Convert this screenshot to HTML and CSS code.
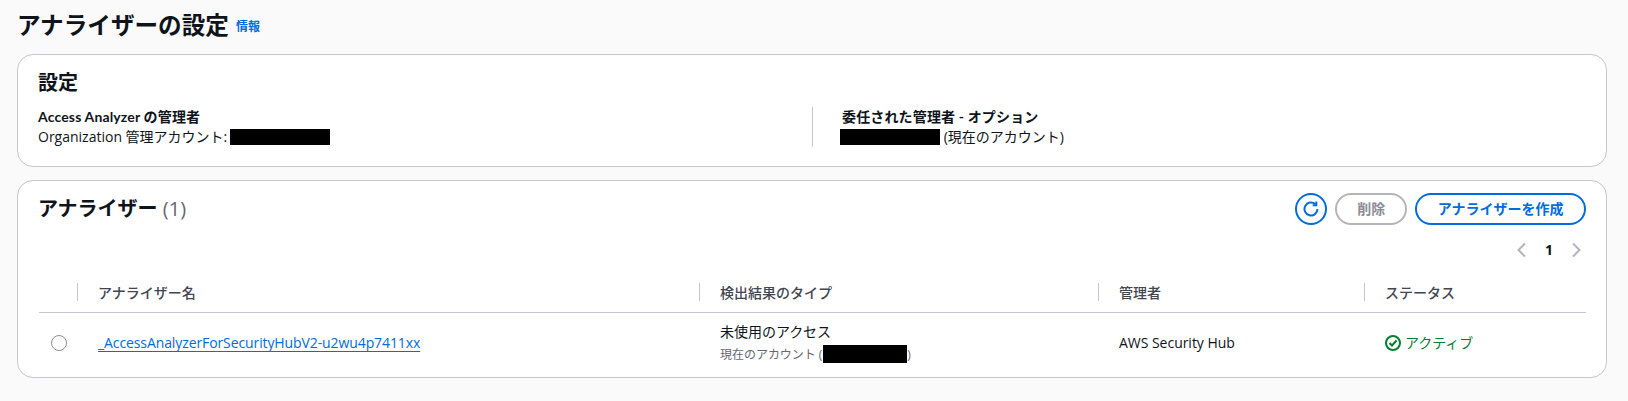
FILE: index.html
```html
<!DOCTYPE html>
<html lang="ja">
<head>
<meta charset="utf-8">
<title>アナライザーの設定</title>
<link rel="stylesheet" href="styles.css">
</head>
<body>
<main class="page">
  <header class="page-head">
    <h1>アナライザーの設定</h1>
    <a class="info" href="#">情報</a>
  </header>

  <section class="card settings">
    <h2>設定</h2>
    <div class="settings-cols">
      <div class="col">
        <div class="label">Access Analyzer の管理者</div>
        <div class="value">Organization 管理アカウント: <span class="redact redact-inline"></span></div>
      </div>
      <div class="col col-second">
        <div class="label">委任された管理者 - オプション</div>
        <div class="value"><span class="redact redact-first"></span> (現在のアカウント)</div>
      </div>
    </div>
  </section>

  <section class="card analyzers">
    <div class="card-head">
      <h2>アナライザー <span class="count">(1)</span></h2>
      <div class="actions">
        <button class="icon-btn" aria-label="更新">
          <svg viewBox="0 0 16 16" width="16" height="16" fill="none" stroke="currentColor" stroke-width="2">
            <path d="M14.5 8a6.5 6.5 0 1 1-2.2-4.9"/>
            <path d="M13.3 0.6v3.6H9.7" stroke-linejoin="miter"/>
          </svg>
        </button>
        <button class="btn disabled">削除</button>
        <button class="btn">アナライザーを作成</button>
      </div>
    </div>
    <div class="pager">
      <svg viewBox="0 0 16 16" width="16" height="16" fill="none" stroke="#b4b4bb" stroke-width="2"><path d="M11 1.5 4.5 8l6.5 6.5"/></svg>
      <span class="page-no">1</span>
      <svg viewBox="0 0 16 16" width="16" height="16" fill="none" stroke="#b4b4bb" stroke-width="2"><path d="M5 1.5 11.5 8 5 14.5"/></svg>
    </div>
    <div class="table">
      <div class="row head-row">
        <div class="cell c-radio"></div>
        <div class="cell c-name"><span class="sep"></span>アナライザー名</div>
        <div class="cell c-type"><span class="sep"></span>検出結果のタイプ</div>
        <div class="cell c-admin"><span class="sep"></span>管理者</div>
        <div class="cell c-status"><span class="sep"></span>ステータス</div>
      </div>
      <div class="row body-row">
        <div class="cell c-radio"><span class="radio"></span></div>
        <div class="cell c-name"><a class="link" href="#">_AccessAnalyzerForSecurityHubV2-u2wu4p7411xx</a></div>
        <div class="cell c-type">
          <div>未使用のアクセス</div>
          <div class="sub">現在のアカウント (<span class="redact redact-sub"></span>)</div>
        </div>
        <div class="cell c-admin">AWS Security Hub</div>
        <div class="cell c-status status">
          <svg viewBox="0 0 16 16" width="16" height="16" fill="none" stroke="currentColor" stroke-width="2"><circle cx="8" cy="8" r="7"/><path d="M4.5 8 7 10.5 11.5 5.5"/></svg>
          アクティブ
        </div>
      </div>
    </div>
  </section>
</main>
</body>
</html>
```

FILE: styles.css
```css
* { box-sizing: border-box; }
html, body { margin: 0; padding: 0; }
body {
  background: #fafafa;
  color: #0f141a;
  font-family: "Open Sans", "Noto Sans CJK JP", sans-serif;
  font-size: 14px;
  line-height: 20px;
  width: 1628px;
  height: 401px;
  overflow: hidden;
}
.page { padding: 9px 21px 0 17px; }
.page-head { display: flex; align-items: center; gap: 7px; height: 32px; margin-bottom: 13px; }
h1 { margin: 0; font-size: 23.6px; line-height: 32px; font-weight: 700; }
.info { color: #006ce0; font-size: 12px; font-weight: 700; text-decoration: none; margin-top: 3px; }
.card {
  background: #fff;
  border: 1px solid #c6c6cd;
  border-radius: 16px;
}
.settings { height: 113px; padding: 15px 20px 0; margin-bottom: 13px; }
h2 { margin: 0; font-size: 20px; line-height: 26px; font-weight: 700; }
.settings-cols { display: grid; grid-template-columns: 774px 1fr; margin-top: 11px; }
.col-second { border-left: 1px solid #c6c6cd; padding-left: 29px; height: 40px; }
.label { font-family: "Lato", "Noto Sans CJK JP", sans-serif; font-weight: 700; letter-spacing: 0.15px; }
.redact { display: inline-block; background: #000; width: 100px; height: 16px; vertical-align: -3px; }
.redact-inline { margin-left: -1px; }
.redact-first { margin-left: -2px; }
.analyzers { height: 198px; padding: 12px 20px 0; }
.card-head { display: flex; justify-content: space-between; align-items: flex-start; }
.card-head h2 { margin-top: 3px; }
.count { color: #656871; font-weight: 400; }
.actions { display: flex; gap: 8px; }
.icon-btn, .btn {
  height: 32px;
  border: 2px solid #006ce0;
  border-radius: 16px;
  background: #fff;
  color: #006ce0;
  font: 700 14px/20px "Open Sans", "Noto Sans CJK JP", sans-serif;
  padding: 0 20.5px;
}
.icon-btn { width: 32px; padding: 0; display: flex; align-items: center; justify-content: center; }
.btn.disabled { border-color: #b4b4bb; color: #8c8c94; padding: 0; width: 72px; }
.pager { display: flex; align-items: center; justify-content: flex-end; gap: 15px; margin-top: 15px; padding-right: 2px; height: 20px; }
.page-no { font-weight: 700; }
.table { margin: 18px 0 0 1px; }
.row { display: grid; grid-template-columns: 38px 622px 399px 266px 1fr; }
.head-row { height: 35px; border-bottom: 1px solid #c6c6cd; align-items: center; color: #424650; font-weight: 500; padding-bottom: 4px; }
.head-row .cell { position: relative; padding-left: 21px; }
.head-row .c-radio { padding: 0; }
.sep { position: absolute; left: 0; top: 0; width: 1px; height: 18px; background: #c6c6cd; }
.body-row { height: 60px; align-items: center; letter-spacing: -0.03px; }
.body-row .cell { padding-left: 21px; }
.body-row .c-radio { padding-left: 12px; }
.radio { display: block; width: 16px; height: 16px; border: 1px solid #8c8c94; border-radius: 50%; }
.link { color: #006ce0; text-underline-offset: 3px; letter-spacing: -0.1px; }
.sub { font-size: 12px; color: #656871; line-height: 18px; margin-top: 3px; }
.redact-sub { width: 84px; height: 18px; vertical-align: -4px; margin-left: 1px; }
.status { color: #00802f; display: flex; align-items: center; gap: 4px; }
```
